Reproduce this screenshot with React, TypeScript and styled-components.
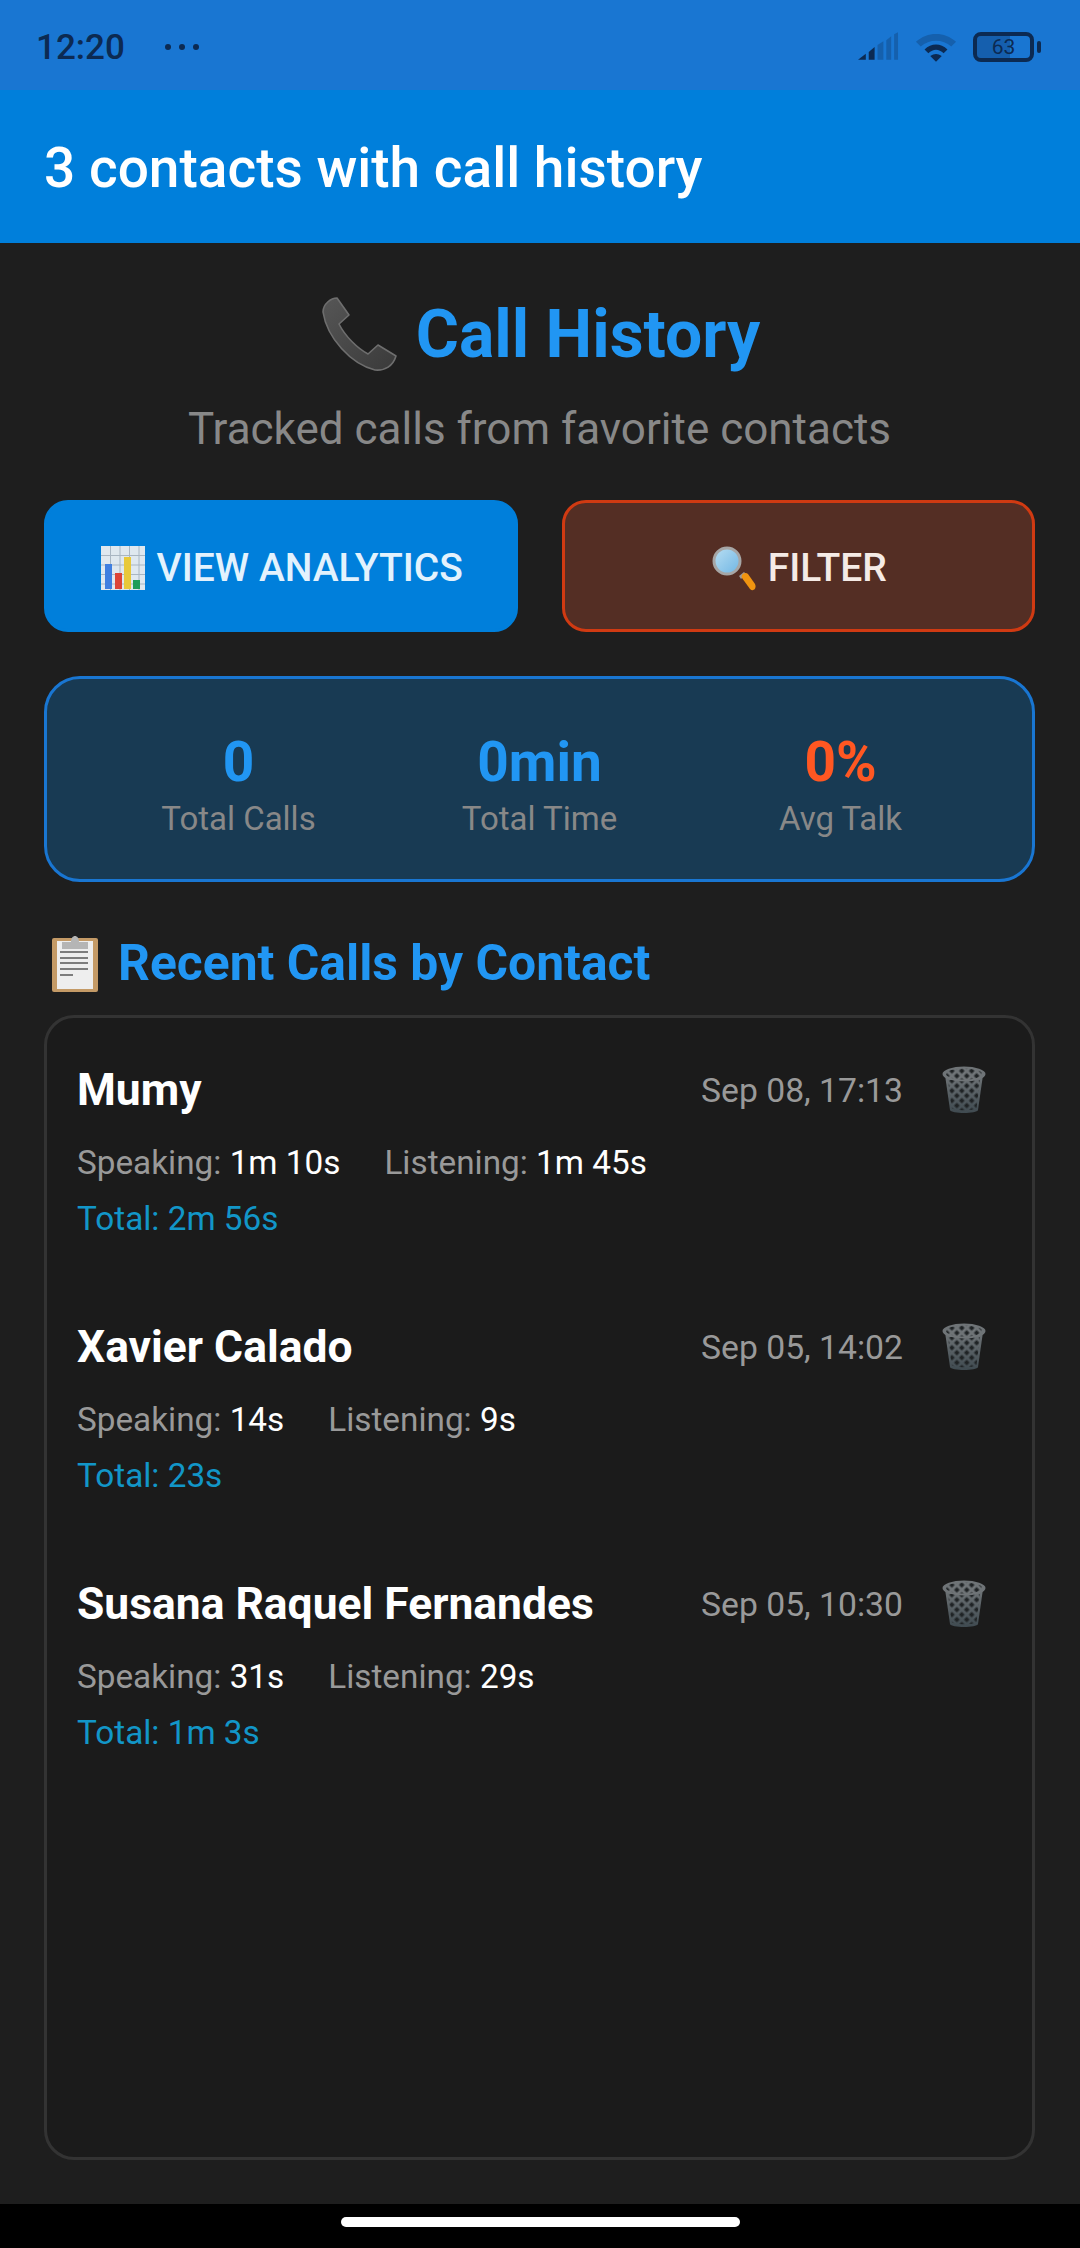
import React from "react";
import styled, { createGlobalStyle } from "styled-components";

const Global = createGlobalStyle`
  html, body {
    margin: 0;
    padding: 0;
    background: #1e1e1e;
    font-family: Roboto, "Noto Sans", sans-serif;
  }
  * { box-sizing: border-box; }
`;

const Page = styled.div`
  width: 1080px;
  height: 2248px;
  display: flex;
  flex-direction: column;
  overflow: hidden;
  background: #1e1e1e;
`;

const StatusBar = styled.div`
  height: 90px;
  background: #1976d2;
  display: flex;
  align-items: center;
  justify-content: space-between;
  padding: 4px 46px 0 36px;
  color: #0c2a52;
`;

const StatusLeft = styled.div`
  display: flex;
  align-items: center;
  gap: 40px;
`;

const Clock = styled.span`
  font-size: 35px;
  font-weight: 500;
`;

const Dots = styled.div`
  display: flex;
  gap: 8px;
`;

const Dot = styled.i`
  width: 6px;
  height: 6px;
  border-radius: 50%;
  background: #0c2a52;
`;

const StatusIcons = styled.div`
  display: flex;
  align-items: center;
  gap: 16px;
`;

const Battery = styled.div`
  position: relative;
  width: 61px;
  height: 30px;
  border: 4px solid #0c2a52;
  border-radius: 8px;
  display: flex;
  align-items: center;
  justify-content: center;
  font-size: 21px;
  color: #0c2a52;
  background: linear-gradient(90deg, #155fae 63%, transparent 63%);
  background-clip: padding-box;
  &::after {
    content: "";
    position: absolute;
    right: -11px;
    top: 5px;
    width: 4px;
    height: 12px;
    border-radius: 2px;
    background: #0c2a52;
  }
`;

const AppBar = styled.div`
  height: 153px;
  background: #007fdb;
  display: flex;
  align-items: center;
  padding: 3px 44px 0;
  color: #fff;
  font-size: 55px;
  font-weight: 500;
`;

const Content = styled.div`
  flex: 1;
  display: flex;
  flex-direction: column;
  padding: 54px 45px 44px 44px;
  min-height: 0;
`;

const Heading = styled.h1`
  margin: 0;
  padding-left: 3px;
  display: flex;
  align-items: center;
  justify-content: center;
  gap: 19px;
  font-size: 66px;
  line-height: 74px;
  font-weight: 700;
  color: #2196f3;
`;

const Subtitle = styled.p`
  margin: 32px 0 0;
  text-align: center;
  font-size: 44px;
  line-height: 50px;
  color: #888;
`;

const Actions = styled.div`
  display: flex;
  gap: 44px;
  margin-top: 46px;
`;

const ActionButton = styled.button<{ $tone: "blue" | "red" }>`
  flex: 1;
  height: 132px;
  display: flex;
  align-items: center;
  justify-content: center;
  gap: 12px;
  padding: 3px 0 0 2px;
  border-radius: 24px;
  font-family: inherit;
  font-size: 39px;
  font-weight: 500;
  border: 3px solid ${(p) => (p.$tone === "blue" ? "#007fdb" : "#d03a12")};
  background: ${(p) => (p.$tone === "blue" ? "#007fdb" : "#542e24")};
  color: ${(p) => (p.$tone === "blue" ? "#e3f2fd" : "#f5ebe6")};
`;

const Stats = styled.div`
  display: flex;
  height: 206px;
  margin-top: 44px;
  padding: 12px 41px 0;
  align-items: center;
  background: #183a53;
  border: 3px solid #1976d2;
  border-radius: 36px;
`;

const Stat = styled.div`
  flex: 1;
  display: flex;
  flex-direction: column;
  align-items: center;
`;

const StatValue = styled.span<{ $accent?: boolean }>`
  font-size: 55px;
  line-height: 64px;
  font-weight: 700;
  color: ${(p) => (p.$accent ? "#ff5722" : "#2196f3")};
`;

const StatLabel = styled.span`
  font-size: 33px;
  line-height: 42px;
  margin-top: 4px;
  color: #888;
`;

const SectionTitle = styled.h2`
  margin: 51px 0 0;
  display: flex;
  align-items: center;
  gap: 20px;
  padding-left: 8px;
  font-size: 49.8px;
  line-height: 60px;
  font-weight: 700;
  color: #2196f3;
`;

const CallCard = styled.div`
  flex: 1;
  margin-top: 22px;
  padding: 30px 30px;
  border: 3px solid #333;
  border-radius: 30px;
  background: #1b1b1b;
  display: flex;
  flex-direction: column;
  gap: 33px;
`;

const CallItem = styled.div`
  height: 224px;
  display: flex;
  flex-direction: column;
`;

const CallHead = styled.div`
  display: flex;
  align-items: center;
  height: 84px;
`;

const CallName = styled.span`
  flex: 1;
  font-size: 44.4px;
  font-weight: 700;
  color: #fff;
`;

const CallDate = styled.span`
  font-size: 33.7px;
  color: #999;
  margin-right: 39px;
`;

const TrashSlot = styled.span`
  display: flex;
  margin-right: 16px;
`;

const CallTimes = styled.div`
  display: flex;
  gap: 44px;
  margin-top: 10px;
  font-size: 33.3px;
  line-height: 42px;
  color: #999;
`;

const TimeValue = styled.span`
  color: #fff;
`;

const CallTotal = styled.div`
  margin-top: 14px;
  font-size: 33.3px;
  line-height: 42px;
  color: #1296c8;
`;

const NavBar = styled.div`
  height: 44px;
  background: #000;
  display: flex;
  justify-content: center;
  padding-top: 13px;
`;

const HomePill = styled.div`
  width: 399px;
  height: 10px;
  border-radius: 5px;
  background: #fff;
`;

const SignalIcon = () => (
  <svg width="41" height="30" viewBox="0 0 42 30">
    <path d="M0 28 L8 22 V28 Z" fill="#0c2a52" />
    <path d="M11 20 L17 15 V28 H11 Z" fill="#0c2a52" />
    <path d="M20 13 L26 9 V28 H20 Z" fill="#1560ad" />
    <path d="M29 8 L34 4 V28 H29 Z" fill="#1560ad" />
    <path d="M37 2 L41 0 V28 H37 Z" fill="#1560ad" />
  </svg>
);

const WifiIcon = () => (
  <svg width="42" height="31" viewBox="0 0 44 32">
    <path d="M1 10 C13 -1 31 -1 43 10 L38 15 C29 7 15 7 6 15 Z" fill="#1560ad" />
    <path d="M10 18 C17 11 27 11 34 18 L30 22 C25 17 19 17 14 22 Z" fill="#0c2a52" />
    <path d="M16 25 C20 22 24 22 28 25 L22 31 Z" fill="#0c2a52" />
  </svg>
);

const PhoneEmoji = () => (
  <svg width="75" height="75" viewBox="-1 -1 75 75">
    <defs>
      <linearGradient id="handset" x1="0" y1="0" x2="1" y2="1">
        <stop offset="0" stopColor="#565656" />
        <stop offset="1" stopColor="#3a3a3a" />
      </linearGradient>
    </defs>
    <path
      d="M0 14 C0 6 8 0 14 0 L26 17 L16 26 C22 38 34 50 45 56 L55 47 L73 58 C70 68 62 73 52 72 C28 66 4 40 0 14 Z"
      fill="url(#handset)"
      stroke="#6e6e6e"
      strokeWidth="1.6"
      strokeLinejoin="round"
    />
  </svg>
);

const ChartEmoji = () => (
  <svg width="44" height="44" viewBox="0 0 44 44">
    <rect width="44" height="44" fill="#dfe8ef" />
    <path
      d="M0 9.5H44M0 19H44M0 28.500H44M0 38H44M9.500 0V44M19 0V44M28.500 0V44M38 0V44"
      stroke="#a9b6c2"
      strokeWidth="1"
    />
    <rect x="4" y="18" width="7" height="25" fill="#3f7fe0" />
    <rect x="14" y="27" width="7" height="16" fill="#dc4437" />
    <rect x="23" y="11" width="7" height="32" fill="#e8c93a" />
    <rect x="32" y="34" width="7" height="9" fill="#1f9d5a" />
  </svg>
);

const GlassEmoji = () => (
  <svg width="44" height="46" viewBox="0 0 44 46">
    <defs>
      <linearGradient id="lens" x1="0" y1="0" x2="1" y2="1">
        <stop offset="0" stopColor="#b9def2" />
        <stop offset="1" stopColor="#6fb6e4" />
      </linearGradient>
    </defs>
    <path d="M27 31 L32 27 L34 29 L29 34 Z" fill="#9a9a9a" />
    <path d="M30 33 C28 30 33 26 36 29 L43 39 C45 44 41 47 38 44 Z" fill="#f09410" />
    <circle cx="15" cy="16" r="13" fill="url(#lens)" stroke="#a6a6a6" strokeWidth="3" />
  </svg>
);

const ClipboardEmoji = () => (
  <svg width="46" height="58" viewBox="0 0 46 58">
    <rect x="0" y="4" width="46" height="54" rx="2" fill="#c49a66" />
    <rect x="5" y="7" width="36" height="48" fill="#eeeeee" />
    <path d="M10 8 H19 C19 0 27 0 27 8 H36 V15 H10 Z" fill="#b5b5b5" />
    <path d="M8 18H36M8 24H36M8 29H36M8 35H36" stroke="#7d7d7d" strokeWidth="2" />
    <path d="M8 41H21" stroke="#7d7d7d" strokeWidth="2" />
  </svg>
);

const TrashEmoji = ({ id }: { id: string }) => (
  <svg width="44" height="48" viewBox="0 0 44 48">
    <defs>
      <linearGradient id={`bin-${id}`} x1="0" y1="0" x2="0" y2="1">
        <stop offset="0" stopColor="#6f7477" />
        <stop offset="1" stopColor="#3f4a50" />
      </linearGradient>
      <pattern id={`mesh-${id}`} width="7" height="7" patternUnits="userSpaceOnUse" patternTransform="rotate(45)">
        <rect width="4" height="4" x="1.500" y="1.500" fill="#1f2325" />
      </pattern>
    </defs>
    <path d="M3 9 L8 44 C9 48 35 48 36 44 L41 9 Z" fill={`url(#bin-${id})`} />
    <path d="M6 14 L9.500 42 C12 45 32 45 34.500 42 L38 14 Z" fill={`url(#mesh-${id})`} />
    <ellipse cx="22" cy="8" rx="21.500" ry="7.500" fill="#6f7477" />
    <ellipse cx="22" cy="8" rx="18" ry="5.500" fill={`url(#mesh-${id})`} />
  </svg>
);

const stats = [
  { value: "0", label: "Total Calls", accent: false },
  { value: "0min", label: "Total Time", accent: false },
  { value: "0%", label: "Avg Talk", accent: true },
];

const calls = [
  { name: "Mumy", date: "Sep 08, 17:13", speaking: "1m 10s", listening: "1m 45s", total: "2m 56s" },
  { name: "Xavier Calado", date: "Sep 05, 14:02", speaking: "14s", listening: "9s", total: "23s" },
  { name: "Susana Raquel Fernandes", date: "Sep 05, 10:30", speaking: "31s", listening: "29s", total: "1m 3s" },
];

export default function App() {
  return (
    <Page>
      <Global />
      <StatusBar>
        <StatusLeft>
          <Clock>12:20</Clock>
          <Dots>
            <Dot />
            <Dot />
            <Dot />
          </Dots>
        </StatusLeft>
        <StatusIcons>
          <SignalIcon />
          <WifiIcon />
          <Battery>63</Battery>
        </StatusIcons>
      </StatusBar>
      <AppBar>3 contacts with call history</AppBar>
      <Content>
        <Heading>
          <PhoneEmoji />
          Call History
        </Heading>
        <Subtitle>Tracked calls from favorite contacts</Subtitle>
        <Actions>
          <ActionButton $tone="blue">
            <ChartEmoji />
            VIEW ANALYTICS
          </ActionButton>
          <ActionButton $tone="red">
            <GlassEmoji />
            FILTER
          </ActionButton>
        </Actions>
        <Stats>
          {stats.map((s) => (
            <Stat key={s.label}>
              <StatValue $accent={s.accent}>{s.value}</StatValue>
              <StatLabel>{s.label}</StatLabel>
            </Stat>
          ))}
        </Stats>
        <SectionTitle>
          <ClipboardEmoji />
          Recent Calls by Contact
        </SectionTitle>
        <CallCard>
          {calls.map((c, i) => (
            <CallItem key={c.name}>
              <CallHead>
                <CallName>{c.name}</CallName>
                <CallDate>{c.date}</CallDate>
                <TrashSlot>
                  <TrashEmoji id={String(i)} />
                </TrashSlot>
              </CallHead>
              <CallTimes>
                <span>
                  Speaking: <TimeValue>{c.speaking}</TimeValue>
                </span>
                <span>
                  Listening: <TimeValue>{c.listening}</TimeValue>
                </span>
              </CallTimes>
              <CallTotal>Total: {c.total}</CallTotal>
            </CallItem>
          ))}
        </CallCard>
      </Content>
      <NavBar>
        <HomePill />
      </NavBar>
    </Page>
  );
}
